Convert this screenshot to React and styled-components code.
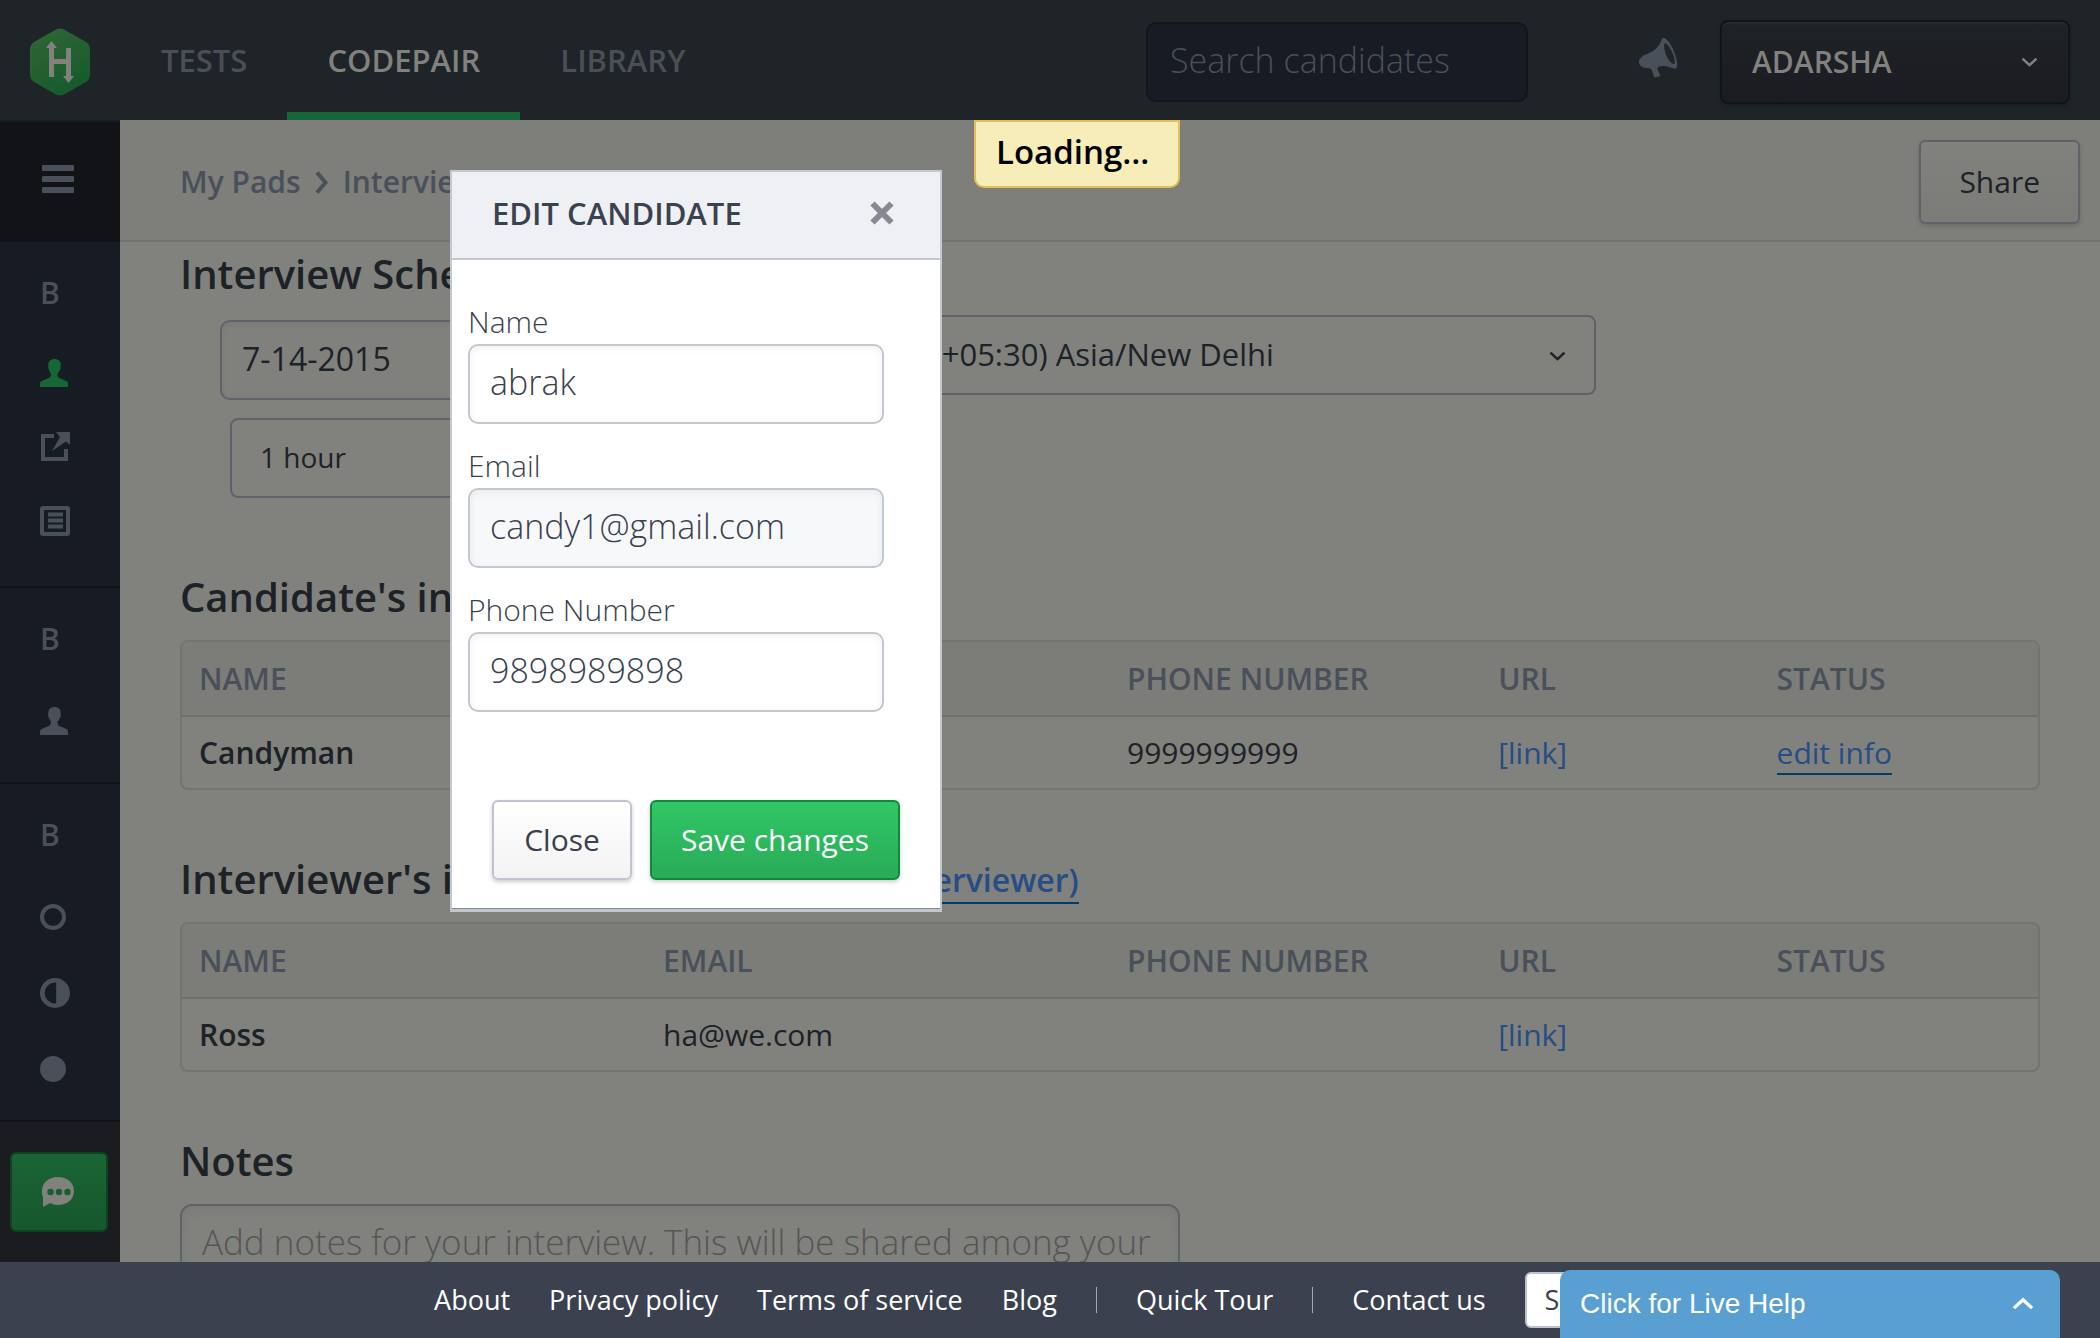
import React from "react";
import styled, { createGlobalStyle } from "styled-components";

const sans = `"Open Sans", "Noto Sans", sans-serif`;

const GlobalStyle = createGlobalStyle`
  *, *::before, *::after { box-sizing: border-box; }
  html, body { margin: 0; }
  body { font-family: ${sans}; font-size: 30px; line-height: 40px; color: #1d2227; background: #81817e; }
  button, input, select, textarea { font: inherit; color: inherit; margin: 0; }
  button { cursor: pointer; }
  a { color: inherit; text-decoration: none; }
`;

const Page = styled.div`
  position: relative;
  display: grid;
  grid-template: 120px minmax(0, 1fr) 76px / 120px minmax(0, 1fr);
  height: 100vh;
  overflow: hidden;
`;

/* Header */
const Header = styled.header`
  grid-column: 1 / -1;
  display: flex;
  align-items: center;
  padding: 4px 30px 0;
  background: #1e2428;
`;
const Logo = styled.a`
  display: flex;
  width: 60px;
  margin-right: 31px;
`;
const Nav = styled.nav`
  display: flex;
  align-self: stretch;
  flex: 1;
`;
const NavLink = styled.a`
  display: flex;
  align-items: center;
  padding: 4px 40px 0;
  border-bottom: 8px solid ${(p) => (p.$active ? "#176636" : "transparent")};
  color: ${(p) => (p.$active ? "#81817d" : "#4a4f56")};
  font-size: 31px;
  font-weight: 600;
`;
const Search = styled.input`
  width: 382px;
  height: 80px;
  padding: 0 22px 4px;
  border: 2px solid #12161b;
  border-radius: 10px;
  background: #171b24;
  font-size: 34px;
  font-weight: 300;
  &::placeholder { color: #4a4f58; opacity: 1; }
`;
const IconButton = styled.button`
  display: flex;
  margin: 0 42px 8px 111px;
  padding: 0;
  border: 0;
  background: none;
  color: #4a505a;
`;
const UserButton = styled.button`
  display: flex;
  align-items: center;
  justify-content: space-between;
  width: 350px;
  height: 84px;
  padding: 0 30px;
  border: 2px solid #121518;
  border-radius: 8px;
  background: linear-gradient(#1f2226, #1a1c22);
  box-shadow: inset 0 2px 2px #272b2f, 0 2px 4px rgba(0, 0, 0, 0.2);
  color: #81817d;
  font-weight: 600;
`;

/* Sidebar */
const Sidebar = styled.aside`
  display: flex;
  flex-direction: column;
  background: #1a1c20;
  color: #4a505a;
`;
const MenuButton = styled.button`
  display: flex;
  align-items: center;
  height: 122px;
  padding: 0 0 6px 42px;
  border: 0;
  border-top: 2px solid #171a20;
  background: #121317;
  color: #4a505a;
`;
const SideGroup = styled.div`
  display: flex;
  flex-direction: column;
  gap: ${(p) => p.$gap || 36}px;
  height: ${(p) => p.$height}px;
  padding: 31px 0 0 40px;
  border-bottom: 2px solid #121317;
  background: #171b23;
`;
const SideItem = styled.a`
  display: flex;
  align-items: center;
  height: 40px;
  color: ${(p) => (p.$active ? "#176636" : "#4a505a")};
`;
const SideLetter = styled(SideItem)`
  margin-bottom: 6px;
  font-weight: 600;
`;
const ChatButton = styled.button`
  display: flex;
  align-items: center;
  width: 98px;
  height: 80px;
  margin: 30px 0 0 10px;
  padding: 0 0 0 30px;
  border: 2px solid #0b441e;
  border-radius: 6px;
  background: linear-gradient(#1a6534, #17572d);
  color: #81817d;
`;

/* Main */
const Main = styled.main`
  display: flex;
  flex-direction: column;
  min-width: 0;
  overflow: hidden;
`;
const TopBar = styled.div`
  display: flex;
  flex: none;
  align-items: center;
  justify-content: space-between;
  height: 122px;
  padding: 4px 20px 0 60px;
  border-bottom: 2px solid #72726f;
  background: #7e7e7a;
`;
const Crumbs = styled.nav`
  display: flex;
  align-items: center;
  gap: 14px;
  color: #4a505a;
  font-weight: 600;
`;
const ShareButton = styled.button`
  height: 84px;
  padding: 0 38px;
  border: 2px solid #606269;
  border-radius: 6px;
  background: linear-gradient(#81817e, #7b7b78);
  box-shadow: 0 2px 4px rgba(0, 0, 0, 0.15);
`;
const Content = styled.div`
  flex: 1;
  min-height: 0;
  padding: 7px 60px 0;
  overflow: hidden;
`;
const Section = styled.section`
  display: flex;
  flex-direction: column;
  margin-bottom: ${(p) => p.$space || 64}px;
`;
const Heading = styled.h2`
  display: flex;
  align-items: center;
  gap: 10px;
  margin: 0 0 ${(p) => p.$below || 18}px;
  font-size: 40px;
  line-height: 50px;
  font-weight: 600;
`;
const AddLink = styled.a`
  margin-top: 4px;
  border-bottom: 2px solid #003c63;
  color: #264d85;
  font-size: 32px;
  line-height: 44px;
`;
const ScheduleRow = styled.div`
  display: flex;
  align-items: flex-start;
  gap: 20px;
  margin-bottom: 18px;
  padding-left: ${(p) => p.$indent}px;
`;
const DateInput = styled.input`
  width: 300px;
  height: 80px;
  margin-top: 5px;
  padding: 0 20px 4px;
  border: 2px solid #606269;
  border-radius: 10px;
  background: #80807d;
  box-shadow: inset 0 2px 6px rgba(0, 0, 0, 0.06);
  font-size: 32px;
`;
const SelectWrap = styled.div`
  position: relative;
  display: flex;
  width: ${(p) => p.$width}px;
  svg { position: absolute; right: 30px; top: 36px; pointer-events: none; }
`;
const Select = styled.select`
  appearance: none;
  width: 100%;
  height: 80px;
  padding: 0 30px 2px ${(p) => p.$inset || 28}px;
  border: 2px solid #606269;
  border-radius: 8px;
  background: transparent;
  font-size: ${(p) => (p.$small ? 28 : 31)}px;
`;
const TableFrame = styled.div`
  border: 2px solid #737370;
  border-radius: 8px;
  overflow: hidden;
`;
const Table = styled.table`
  width: 100%;
  border-collapse: collapse;
  table-layout: fixed;
  th, td { height: 74px; padding: 0 17px; text-align: left; font-weight: 400; white-space: nowrap; }
  thead th { background: #7c7c79; color: #4a505a; font-weight: 600; border-bottom: 2px solid #6e6e6b; }
  tbody th { font-weight: 600; }
  tbody th, tbody td { height: 72px; }
`;
const TextLink = styled.a`
  color: #264d85;
  border-bottom: ${(p) => (p.$underlined ? "2px solid #003c63" : "0")};
`;
const Notes = styled.textarea`
  width: 1000px;
  height: 200px;
  padding: 14px 14px 14px 20px;
  border: 2px solid #606269;
  border-radius: 12px;
  background: transparent;
  box-shadow: inset 0 4px 12px rgba(0, 0, 0, 0.06);
  resize: none;
  overflow: hidden;
  font-size: 35px;
  font-weight: 300;
  line-height: 44px;
  &::placeholder { color: #565653; opacity: 1; }
`;

/* Footer */
const Footer = styled.footer`
  grid-column: 1 / -1;
  display: flex;
  justify-content: center;
  align-items: center;
  gap: 39px;
  background: #3b414f;
  color: #fff;
  font-size: 27px;
`;
const Divider = styled.span`
  width: 1px;
  height: 26px;
  background: #a4a8b0;
`;
const SupportButton = styled.button`
  height: 56px;
  padding: 0 18px;
  border: 2px solid #bcc2ce;
  border-radius: 6px;
  background: #fff;
  color: #39424e;
`;
const LiveHelp = styled.button`
  position: absolute;
  right: 40px;
  bottom: 0;
  display: flex;
  align-items: center;
  justify-content: space-between;
  width: 500px;
  height: 68px;
  padding: 0 26px 0 20px;
  border: 0;
  border-radius: 10px 10px 0 0;
  background: #5a9fd2;
  color: #fff;
  font-family: "Liberation Sans", Arial, sans-serif;
  font-size: 28px;
`;

/* Overlays */
const Loading = styled.div`
  position: absolute;
  top: 120px;
  left: 974px;
  padding: 10px 29px 14px 20px;
  border: 2px solid #e5bf55;
  border-radius: 0 0 10px 10px;
  background: #f6edb9;
  color: #000;
  font-size: 33px;
  font-weight: 600;
`;
const Modal = styled.form`
  position: absolute;
  top: 170px;
  left: 450px;
  width: 492px;
  border: 2px solid #c2c7d0;
  border-bottom-width: 3px;
  background: #fff;
  color: #39424e;
`;
const ModalHeader = styled.header`
  display: flex;
  align-items: center;
  justify-content: space-between;
  height: 88px;
  padding: 0 46px 4px 40px;
  border-bottom: 2px solid #c2c7d0;
  background: #eff0f3;
`;
const ModalTitle = styled.h3`
  margin: 0;
  font-size: 31px;
  font-weight: 600;
`;
const CloseIcon = styled.button`
  display: flex;
  padding: 0;
  border: 0;
  background: none;
  color: #858991;
`;
const Fields = styled.div`
  display: flex;
  flex-direction: column;
  gap: 22px;
  padding: 42px 56px 88px 16px;
`;
const Field = styled.label`
  display: flex;
  flex-direction: column;
  gap: 2px;
  font-weight: 300;
`;
const FieldInput = styled.input`
  width: 100%;
  height: 80px;
  padding: 0 20px 4px;
  border: 2px solid #c2c7d0;
  border-radius: 10px;
  background: ${(p) => (p.readOnly ? "#f7f8fa" : "#fff")};
  box-shadow: inset 0 2px 8px rgba(0, 0, 0, 0.06);
  font-size: 34px;
`;
const Actions = styled.div`
  display: flex;
  gap: 18px;
  padding: 0 40px 28px;
  border-bottom: 1px solid #85878a;
`;
const ActionButton = styled.button`
  flex: ${(p) => (p.$primary ? "1" : "0 0 140px")};
  height: 80px;
  padding: 0;
  border: 2px solid ${(p) => (p.$primary ? "#0f8a3a" : "#bfc4cf")};
  border-radius: 6px;
  background: ${(p) => (p.$primary ? "linear-gradient(#31c766, #29ab57)" : "linear-gradient(#fff, #f3f3f4)")};
  box-shadow: 0 2px 4px rgba(0, 0, 0, 0.2);
  color: ${(p) => (p.$primary ? "#fff" : "#39424e")};
  white-space: nowrap;
`;

const Chevron = ({ up, w = 17 }) => (
  <svg width={w} height={w * 0.6} viewBox="0 0 17 10" fill="none" stroke="currentColor" strokeWidth="2.6" aria-hidden="true">
    <path d={up ? "M1.5 8.5 8.5 2l7 6.5" : "M1.5 1.5l7 6.5 7-6.5"} />
  </svg>
);
const PersonIcon = () => (
  <svg width="28" height="28" viewBox="0 0 28 28" fill="currentColor" aria-hidden="true">
    <path d="M14.500 0c4 0 6.300 2.300 6.300 6 0 1-.3 1.500-.1 2.500.2 1.200-1 2.400-1.300 3.500-.5 1.500-1.900 2.200-1.900 3.500 0 3.500 3 4 6 5.200 3.500 1.300 4.500 2 4.500 4.300v3H0v-3c0-2.300 1-3 4.500-4.300 3-1.200 6.500-1.700 6.500-5.200 0-1.300-1-2-1.500-3.500C9.200 10.900 8 9.700 8.200 8.500 8.400 7.500 8 7 8.200 6c.2-3.700 2.300-6 6.300-6z" />
  </svg>
);
const ShareIcon = () => (
  <svg width="30" height="30" viewBox="0 0 30 30" aria-hidden="true">
    <path d="M14 4H3v23h23V17" fill="none" stroke="currentColor" strokeWidth="4" />
    <path d="M16 0h14v13l-4-3.500L12 19 20 5z" fill="currentColor" />
  </svg>
);
const ListIcon = () => (
  <svg width="30" height="30" viewBox="0 0 30 30" aria-hidden="true">
    <rect x="2" y="2" width="26" height="26" rx="1" fill="none" stroke="currentColor" strokeWidth="4" />
    <path d="M8 8.500h15M8 14.500h15M8 20.500h15" stroke="currentColor" strokeWidth="4" />
  </svg>
);
const CircleIcon = ({ kind }) => (
  <svg width={kind === "half" ? 30 : 26} height={kind === "half" ? 30 : 26} viewBox="0 0 26 26" aria-hidden="true">
    <circle cx="13" cy="13" r="11" fill={kind === "full" ? "currentColor" : "none"} stroke="currentColor" strokeWidth="4" />
    {kind === "half" && <path d="M14 2a11 11 0 0 1 0 22z" fill="currentColor" />}
  </svg>
);

const TableOf = ({ label, row, action }) => (
  <TableFrame>
    <Table aria-label={label}>
      <colgroup>
        <col style={{ width: "25%" }} />
        <col style={{ width: "25%" }} />
        <col style={{ width: "20%" }} />
        <col style={{ width: "15%" }} />
        <col style={{ width: "15%" }} />
      </colgroup>
      <thead>
        <tr>
          {["NAME", "EMAIL", "PHONE NUMBER", "URL", "STATUS"].map((h) => (
            <th key={h} scope="col">{h}</th>
          ))}
        </tr>
      </thead>
      <tbody>
        <tr>
          <th scope="row">{row.name}</th>
          <td>{row.email}</td>
          <td>{row.phone}</td>
          <td><TextLink href="#url">[link]</TextLink></td>
          <td>{action && <TextLink href="#edit" $underlined>{action}</TextLink>}</td>
        </tr>
      </tbody>
    </Table>
  </TableFrame>
);

export default function App() {
  return (
    <>
      <GlobalStyle />
      <Page>
        <Header>
          <Logo href="#home" aria-label="Home">
            <svg width="60" height="68" viewBox="0 0 60 68" aria-hidden="true">
              <defs>
                <linearGradient id="hex" x1="0.2" y1="0" x2="0.7" y2="1">
                  <stop offset="0" stopColor="#306534" />
                  <stop offset="1" stopColor="#145b2d" />
                </linearGradient>
              </defs>
              <path d="M26 1.500Q30-.5 34 1.500L56 14q4 3 4 7v26q0 4-4 7L34 66.500q-4 2-8 0L4 54q-4-3-4-7V21q0-4 4-7z" fill="url(#hex)" />
              <path d="M19 19h5v12h12V20h5v28h3l-5.500 7L33 48h3V36H24v13h-5V20h-3l5.500-7L27 20h-3" fill="#81817d" />
            </svg>
          </Logo>
          <Nav aria-label="Primary">
            <NavLink href="#tests">TESTS</NavLink>
            <NavLink href="#codepair" $active>CODEPAIR</NavLink>
            <NavLink href="#library">LIBRARY</NavLink>
          </Nav>
          <Search type="search" aria-label="Search candidates" placeholder="Search candidates" />
          <IconButton aria-label="Announcements">
            <svg width="39" height="40" viewBox="0 0 39 40" aria-hidden="true">
              <path fillRule="evenodd" fill="currentColor" d="M24 0c2-.5 6 3 9 9 4 8 6.500 18 4.500 21-2 2.500-9-3.500-17-1.500-1.500.5-2.500 1.500-2 3l3 6.500-5 1.500c-3-.5-2-5-4.500-8.500-1-1.200-3-.5-5-1C2 29.500 0 26.500 0 24c0-3.500 3-6 8-8C16 13 20.500 8 22.500 2c.2-1 .7-1.700 1.500-2zm1.500 5c-1 3 0 9 2.500 14 2.500 4.500 5.500 7.500 7.500 7 .8-4-1-10-4-15-2-3.500-4.500-6-6-6z" />
            </svg>
          </IconButton>
          <UserButton>ADARSHA<Chevron /></UserButton>
        </Header>

        <Sidebar>
          <MenuButton aria-label="Menu">
            <svg width="32" height="28" viewBox="0 0 32 28" fill="currentColor" aria-hidden="true">
              <rect width="32" height="6" rx="1" />
              <rect y="11" width="32" height="6" rx="1" />
              <rect y="22" width="32" height="6" rx="1" />
            </svg>
          </MenuButton>
          <SideGroup $height={346} $gap={34}>
            <SideLetter href="#b1">B</SideLetter>
            <SideItem href="#people" $active aria-label="People"><PersonIcon /></SideItem>
            <SideItem href="#share" aria-label="Open"><ShareIcon /></SideItem>
            <SideItem href="#list" aria-label="List"><ListIcon /></SideItem>
          </SideGroup>
          <SideGroup $height={196}>
            <SideLetter href="#b2">B</SideLetter>
            <SideItem href="#person" aria-label="Person"><PersonIcon /></SideItem>
          </SideGroup>
          <SideGroup $height={338}>
            <SideLetter href="#b3">B</SideLetter>
            <SideItem href="#empty" aria-label="Not started"><CircleIcon /></SideItem>
            <SideItem href="#half" aria-label="In progress"><CircleIcon kind="half" /></SideItem>
            <SideItem href="#full" aria-label="Done"><CircleIcon kind="full" /></SideItem>
          </SideGroup>
          <ChatButton aria-label="Chat">
            <svg width="32" height="32" viewBox="0 0 32 32" aria-hidden="true">
              <path d="M16 1c9 0 16 5.500 16 14s-7 14-16 14c-3 0-6-.7-8-2-2 1-5 3-7 4V21c-.7-1-1-4-1-6C0 6.500 7 1 16 1z" fill="currentColor" />
              <g fill="#185e30"><circle cx="8.500" cy="16" r="3.200" /><circle cx="17" cy="16" r="3.200" /><circle cx="25.500" cy="16" r="3.200" /></g>
            </svg>
          </ChatButton>
        </Sidebar>

        <Main>
          <TopBar>
            <Crumbs aria-label="Breadcrumb">
              <a href="#pads">My Pads</a>
              <svg width="14" height="23" viewBox="0 0 14 23" fill="none" stroke="currentColor" strokeWidth="4" aria-hidden="true">
                <path d="M2 1.500l8.500 10L2 21.500" />
              </svg>
              <a href="#interview">Interview with candy</a>
            </Crumbs>
            <ShareButton>Share</ShareButton>
          </TopBar>
          <Content>
            <Section $space={56}>
              <Heading $below={16}>Interview Schedule</Heading>
              <ScheduleRow $indent={40}>
                <DateInput aria-label="Date" defaultValue="7-14-2015" />
                <SelectWrap $width={1056}>
                  <Select aria-label="Time zone" $inset={315} defaultValue="ist">
                    <option value="ist">(GMT +05:30) Asia/New Delhi</option>
                  </Select>
                  <Chevron />
                </SelectWrap>
              </ScheduleRow>
              <ScheduleRow $indent={50}>
                <SelectWrap $width={300}>
                  <Select aria-label="Duration" $small defaultValue="1">
                    <option value="1">1 hour</option>
                  </Select>
                  <Chevron />
                </SelectWrap>
              </ScheduleRow>
            </Section>
            <Section>
              <Heading>Candidate's information</Heading>
              <TableOf label="Candidates" row={{ name: "Candyman", email: "", phone: "9999999999" }} action="edit info" />
            </Section>
            <Section>
              <Heading>Interviewer's information <AddLink href="#add">(add another interviewer)</AddLink></Heading>
              <TableOf label="Interviewers" row={{ name: "Ross", email: "ha@we.com", phone: "" }} />
            </Section>
            <Section>
              <Heading as="label" htmlFor="notes">Notes</Heading>
              <Notes id="notes" placeholder="Add notes for your interview. This will be shared among your" />
            </Section>
          </Content>
        </Main>

        <Footer>
          <a href="#about">About</a>
          <a href="#privacy">Privacy policy</a>
          <a href="#terms">Terms of service</a>
          <a href="#blog">Blog</a>
          <Divider />
          <a href="#tour">Quick Tour</a>
          <Divider />
          <a href="#contact">Contact us</a>
          <SupportButton>Support</SupportButton>
        </Footer>

        <Loading role="status">Loading...</Loading>
        <Modal role="dialog" aria-labelledby="edit-title" onSubmit={(e) => e.preventDefault()}>
          <ModalHeader>
            <ModalTitle id="edit-title">EDIT CANDIDATE</ModalTitle>
            <CloseIcon type="button" aria-label="Close dialog">
              <svg width="24" height="24" viewBox="0 0 24 24" stroke="currentColor" strokeWidth="6" aria-hidden="true">
                <path d="M2.500 2.500l19 19M21.500 2.500l-19 19" />
              </svg>
            </CloseIcon>
          </ModalHeader>
          <Fields>
            <Field>Name<FieldInput defaultValue="abrak" /></Field>
            <Field>Email<FieldInput defaultValue="candy1@gmail.com" readOnly /></Field>
            <Field>Phone Number<FieldInput type="tel" defaultValue="9898989898" /></Field>
          </Fields>
          <Actions>
            <ActionButton type="button">Close</ActionButton>
            <ActionButton $primary>Save changes</ActionButton>
          </Actions>
        </Modal>
        <LiveHelp>Click for Live Help<Chevron up w={22} /></LiveHelp>
      </Page>
    </>
  );
}
